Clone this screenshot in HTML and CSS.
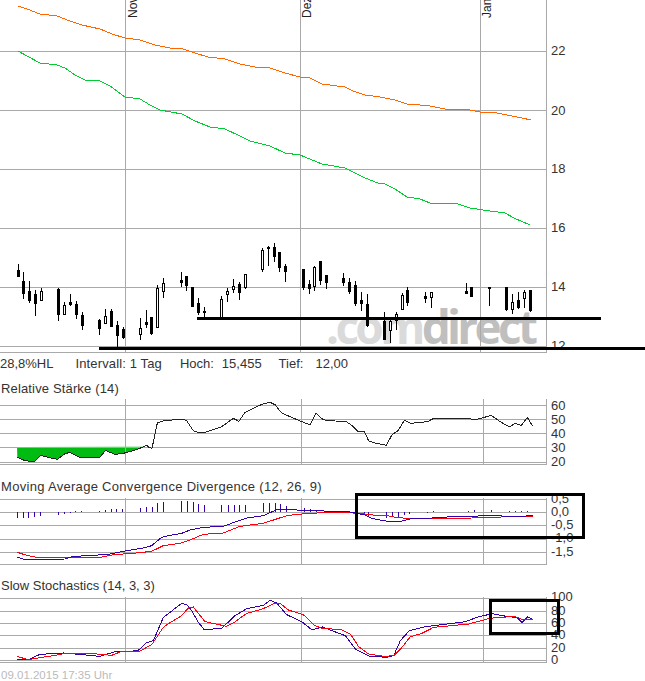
FILE: index.html
```html
<!DOCTYPE html>
<html lang="de">
  <head>
    <meta charset="UTF-8" />
    <title>Chart</title>
    <link rel="stylesheet" href="styles.css">
  </head>

  <body>
    <svg id="price" class="plot price-plot" width="645" height="354">
      <text class="logo" x="326" y="344"><tspan class="logo-light">.com</tspan><tspan>direct</tspan></text>
      <text class="axis" x="551" y="55">22</text>
      <text class="axis" x="551" y="114.5">20</text>
      <text class="axis" x="551" y="173">18</text>
      <text class="axis" x="551" y="232">16</text>
      <text class="axis" x="551" y="291">14</text>
      <text class="axis" x="551" y="350">12</text>
      <text class="month" transform="translate(137 18) rotate(-90)">Nov</text>
      <text class="month" transform="translate(311 18) rotate(-90)">Dez</text>
      <text class="month" transform="translate(491 18) rotate(-90)">Jan</text>
    </svg>

    <div class="info">
      <span class="info-range">28,8%HL</span>
      <span class="info-interval">Intervall: 1 Tag</span>
      <span class="info-high">Hoch:</span>
      <span class="info-high-value">15,455</span>
      <span class="info-low">Tief:</span>
      <span class="info-low-value">12,00</span>
    </div>

    <div class="title title-rsi">Relative Stärke (14)</div>
    <svg id="rsi" class="plot rsi-plot" width="645" height="72">
      <text class="axis" x="551" y="11">60</text>
      <text class="axis" x="551" y="25">50</text>
      <text class="axis" x="551" y="39">40</text>
      <text class="axis" x="551" y="53">30</text>
      <text class="axis" x="551" y="67">20</text>
    </svg>

    <div class="title title-macd">Moving Average Convergence Divergence (12, 26, 9)</div>
    <svg id="macd" class="plot macd-plot" width="645" height="72">
      <text class="axis" x="551" y="6">0,5</text>
      <text class="axis" x="551" y="19">0,0</text>
      <text class="axis" x="551" y="32">-0,5</text>
      <text class="axis" x="551" y="45">-1,0</text>
      <text class="axis" x="551" y="59">-1,5</text>
    </svg>

    <div class="title title-stoch">Slow Stochastics (14, 3, 3)</div>
    <svg id="stoch" class="plot stoch-plot" width="645" height="71">
      <text class="axis" x="551" y="5">100</text>
      <text class="axis" x="551" y="19">80</text>
      <text class="axis" x="551" y="31">60</text>
      <text class="axis" x="551" y="43">40</text>
      <text class="axis" x="551" y="56">20</text>
      <text class="axis" x="551" y="68">0</text>
    </svg>

    <div class="stamp">09.01.2015 17:35 Uhr</div>

    <!-- hand drawn marks on top of the chart -->
    <div class="mark mark-line-top"></div>
    <div class="mark mark-line-bottom"></div>
    <div class="mark mark-box-macd"></div>
    <div class="mark mark-box-stoch"></div>

    <script src="chart.js"></script>
  </body>
</html>
```

FILE: styles.css
```css
body {
  position: relative;
  width: 645px;
  height: 681px;
  margin: 0;
  overflow: hidden;
  background-color: white;
  color: #333;
  font-family: "Liberation Sans", Arial, sans-serif;
  font-size: 13px;
}

.plot {
  display: block;
  overflow: visible;
}

.axis {
  fill: #333;
  font-size: 13px;
}

.month {
  fill: #222;
  font-size: 12px;
}

.logo {
  fill: #bfbfbf;
  font-family: "Open Sans", sans-serif;
  font-size: 46px;
  font-weight: 700;
  letter-spacing: -3.7px;
}

.logo-light {
  fill: #dadada;
}

.grid {
  stroke: #a9a9a9;
  stroke-width: 1;
  shape-rendering: crispEdges;
}

.curve {
  fill: none;
  stroke-width: 1;
  shape-rendering: crispEdges;
}

.orange { stroke: #ff6600; }
.green { stroke: #00cc33; }
.dark { stroke: #222; }
.blue { stroke: #3300aa; }
.red { stroke: #ff0011; }

.rsi-fill {
  fill: #00bb11;
  stroke: none;
}

.wick {
  stroke: black;
  stroke-width: 1;
  shape-rendering: crispEdges;
}

.body-up {
  fill: white;
  stroke: black;
  stroke-width: 1;
  shape-rendering: crispEdges;
}

.body-down {
  fill: black;
  shape-rendering: crispEdges;
}

.info {
  display: flex;
  height: 25px;
  line-height: 20px;
}

.info-interval { margin-left: 22px; letter-spacing: 0.13px; }
.info-high { margin-left: 18px; }
.info-high-value { margin-left: 8px; }
.info-low { margin-left: 17px; }
.info-low-value { margin-left: 12px; }

.title {
  height: 20px;
  padding-left: 1px;
  line-height: 20px;
  white-space: nowrap;
}

.title-rsi { letter-spacing: 0.15px; }
.title-macd { margin-top: 6px; letter-spacing: 0.3px; }
.title-stoch { margin-top: 7px; }

.stamp {
  padding-left: 1px;
  color: #bbb;
  font-size: 11.5px;
  line-height: 16px;
}

.mark {
  position: absolute;
  box-sizing: border-box;
}

.mark-line-top {
  left: 197px;
  top: 317px;
  width: 404px;
  height: 3px;
  background-color: black;
}

.mark-line-bottom {
  left: 99px;
  top: 347px;
  width: 546px;
  height: 3px;
  background-color: black;
}

.mark-box-macd {
  left: 355px;
  top: 493px;
  width: 230px;
  height: 46px;
  border: 3px solid black;
}

.mark-box-stoch {
  left: 489px;
  top: 599px;
  width: 71px;
  height: 36px;
  border: 3px solid black;
}
```

FILE: chart.js
```js
const NS = "http://www.w3.org/2000/svg";

function add(svg, tag, attrs) {
  const el = document.createElementNS(NS, tag);
  for (const key in attrs) {
    el.setAttribute(key, attrs[key]);
  }
  svg.append(el);
  return el;
}

// readings were taken at 3x, so flat lists of x,y get divided back
function read(list, x0, y0) {
  const out = [];
  for (let i = 0; i < list.length; i += 2) {
    out.push([x0 + list[i] / 3, y0 + list[i + 1] / 3]);
  }
  return out;
}

function grid(svg, hLines, vLines, top, bottom) {
  for (const y of hLines) {
    add(svg, "line", { class: "grid", x1: 0, x2: 546, y1: y + 0.5, y2: y + 0.5 });
  }
  for (const x of vLines) {
    add(svg, "line", { class: "grid", x1: x + 0.5, x2: x + 0.5, y1: top, y2: bottom });
  }
}

function curve(svg, points, top, color) {
  const str = points.map((p) => p[0] + "," + (p[1] - top)).join(" ");
  add(svg, "polyline", { class: "curve " + color, points: str });
}

/* price */
const price = document.querySelector("#price");
grid(price, [51, 110, 169, 228, 287, 346, 352], [125, 300, 480, 546], 0, 353);

curve(price, [[18,6],[27,9],[40,14],[57,16],[70,21],[82,25],[100,29],[112,34],[125,38],[140,40],[155,45],[170,48],[183,49],[195,53],[208,57],[225,59],[240,64],[255,67],[270,68],[285,73],[300,77],[310,78],[322,84],[345,87],[353,91],[365,95],[380,97],[395,100],[407,104],[420,105],[430,106],[445,109],[470,110],[480,112],[497,113],[507,115],[522,118],[531,120]], 0, "orange");
curve(price, [[18,51],[27,56],[40,63],[57,65],[65,68],[75,75],[85,80],[100,81],[110,86],[125,97],[140,99],[150,105],[160,110],[182,114],[195,121],[210,127],[225,129],[240,136],[250,141],[270,146],[285,153],[300,155],[322,164],[345,168],[365,178],[378,183],[385,184],[395,189],[407,197],[420,199],[430,203],[458,204],[470,208],[490,211],[505,213],[514,218],[530,225]], 0, "green");

// x, wick top, wick bottom, body top, body bottom, hollow (all at 3x, y from 230)
const candles = [
  [55,102,140,120,138],[70,127,207,153,188],[88,153,218,183,210],[106,180,258,193,218],[124,175,212,184,210,1],
  [175,175,273,177,251],[193,215,255,226,252,1],[211,193,227,216,221],[229,213,266,222,252],[247,246,299,255,285],
  [298,266,315,271,293],[316,237,278,259,278,1],[334,238,292,243,288],[352,274,350,286,316],[368,292,327,298,321],
  [421,265,329,295,311,1],[439,240,293,276,281],[454,262,314,262,308],[472,165,290,175,290,1],[490,144,204,160,182,1],
  [544,126,171,151,155],[559,138,183,139,165],[577,170,231,171,228],[595,205,255,220,245],[613,232,262,242,245],
  [664,197,264,207,260,1],[682,175,216,183,191,1],[700,147,190,169,176,1],[718,155,210,162,185],[736,133,176,133,172,1],
  [787,55,126,60,117,1],[805,48,108,50,53],[823,40,96,51,77],[838,66,127,67,110],[856,103,156,109,122],
  [910,118,180,118,172],[928,150,192,162,174],[943,107,183,112,167,1],[961,94,165,94,150],[978,134,177,135,155],
  [1030,128,168,145,157],[1048,145,192,156,183],[1066,153,228,165,218],[1084,186,243,211,218],[1102,192,290,222,285],
  [1153,245,330,272,327],[1171,262,338,274,299,1],[1189,245,300,253,271,1],[1207,188,236,196,236,1],[1222,172,228,180,215],
  [1276,186,218,199,203],[1294,186,234,187,200,1],[1399,158,192,183,189],[1414,171,200,171,198],
  [1468,171,228,171,175],[1519,170,243,171,236],[1537,192,252,216,236,1],[1555,186,236,210,230],[1573,181,234,187,205,1],[1591,180,246,180,240]
];

for (const c of candles) {
  const x = Math.round(c[0] / 3) + 0.5;
  const y = (v) => Math.round(230 + v / 3);
  add(price, "line", { class: "wick", x1: x, x2: x, y1: y(c[1]), y2: y(c[2]) });
  if (c[5]) {
    add(price, "rect", { class: "body-up", x: x - 1, y: y(c[3]) + 0.5, width: 2, height: y(c[4]) - y(c[3]) });
  } else {
    add(price, "rect", { class: "body-down", x: x - 1.5, y: y(c[3]), width: 3, height: y(c[4]) - y(c[3]) + 1 });
  }
}

/* relative strength */
const rsi = document.querySelector("#rsi");
const rsiTop = 400;
const rsiLeft = read([52,250,75,260,103,263,122,244,145,250,172,256,195,239,210,235,240,250,300,250,316,229,345,241,370,238,400,230,432,218], 0, 375);

add(rsi, "polygon", {
  class: "rsi-fill",
  points: [[17, 448]].concat(rsiLeft).map((p) => p[0] + "," + (p[1] - rsiTop)).join(" ")
});
grid(rsi, [6, 20, 34, 48, 63, 65], [125, 301, 483, 546], 0, 66);
curve(rsi, rsiLeft.concat(
  read([440,214,445,219,456,223,472,147,490,141,545,135,560,140,580,170,595,176,615,175,665,158,700,133,717,142,735,115,790,89,810,85,825,92,845,117,905,143,930,152,948,118,966,134], 0, 375),
  read([0,137,40,141,72,142,90,155,107,172,127,172,140,201,160,207,193,214,210,182,228,170,247,139,265,148,300,145,320,141,335,133,440,133,458,138,480,132,508,124,530,140,562,159,580,148,598,154,616,130,632,157], 322, 375)
), rsiTop, "dark");

/* macd */
const macd = document.querySelector("#macd");
const macdTop = 498;
grid(macd, [2, 15, 28, 42, 55, 67], [125, 301, 483, 546], 1, 68);

const bars = [52,131,70,131,85,131,103,128,121,126,175,123,193,119,211,118,226,112,244,112,298,112,316,108,334,105,349,105,367,105,421,102,439,100,457,98,472,88,490,84,544,81,562,81,580,85,595,90,613,94,664,94,685,94,703,94,718,94,736,94,790,87,808,87,826,88,841,90,859,97,913,103,931,106,949,107,1091,122,1105,125,1159,131,1177,129,1195,129,1213,122,1228,119,1282,116,1300,111,1405,111,1423,108,1474,108,1528,111,1546,111,1564,111,1582,111,1597,114];
for (const b of read(bars, 0, 475)) {
  const x = Math.round(b[0]) + 0.5;
  add(macd, "line", { class: "curve blue", x1: x, x2: x, y1: 513 - macdTop, y2: Math.round(b[1]) - macdTop });
}

curve(macd, read([52,235,80,244,110,250,200,250,300,250,340,242,400,238,455,232,490,215,540,208,570,198,610,181,670,177,720,157,790,148,860,125,890,121,966,116], 0, 475).concat(
  read([0,116,80,116,130,120,170,125,195,125,220,130,265,134,330,133,385,133,450,132,480,130,535,130,540,127,590,127,633,127], 322, 475)
), macdTop, "red");
curve(macd, read([52,250,80,258,110,257,195,255,220,247,270,245,330,240,370,232,430,222,455,215,485,190,510,184,545,178,570,168,610,160,670,157,700,146,740,132,790,125,830,107,880,106,900,110,966,109], 0, 475).concat(
  read([0,110,5,111,78,113,100,117,130,123,150,133,185,140,205,143,240,141,265,135,330,132,390,128,450,127,485,125,590,127,633,125], 322, 475)
), macdTop, "blue");

/* stochastics */
const stoch = document.querySelector("#stoch");
const stochTop = 597;
grid(stoch, [2, 15, 27, 39, 52, 64, 66], [125, 301, 483, 546], 1, 67);

curve(stoch, read([52,255,65,257,85,257,120,241,190,237,235,241,300,247,345,233,375,234,415,229,440,206,460,200,490,130,510,115,545,88,560,92,575,110,595,145,612,166,640,165,665,163,705,125,740,104,790,94,810,79,830,87,860,122,905,143,935,167,966,160], 0, 575).concat(
  read([0,158,30,170,70,185,100,225,140,246,195,250,215,245,235,200,262,170,310,158,430,143,465,130,510,119,540,125,585,131,600,146,617,128,632,137], 322, 575)
), stochTop, "blue");
curve(stoch, read([52,248,75,254,85,257,125,250,160,245,185,240,270,238,335,244,360,234,420,231,455,212,490,160,510,146,545,125,565,102,580,99,615,143,680,157,700,147,740,118,785,106,820,90,840,88,865,108,910,122,945,155,966,163], 0, 575).concat(
  read([0,162,60,168,85,180,110,218,140,240,185,247,215,245,240,220,265,188,300,178,335,160,440,150,500,134,525,130,580,128,600,136,632,136], 322, 575)
), stochTop, "red");
```
